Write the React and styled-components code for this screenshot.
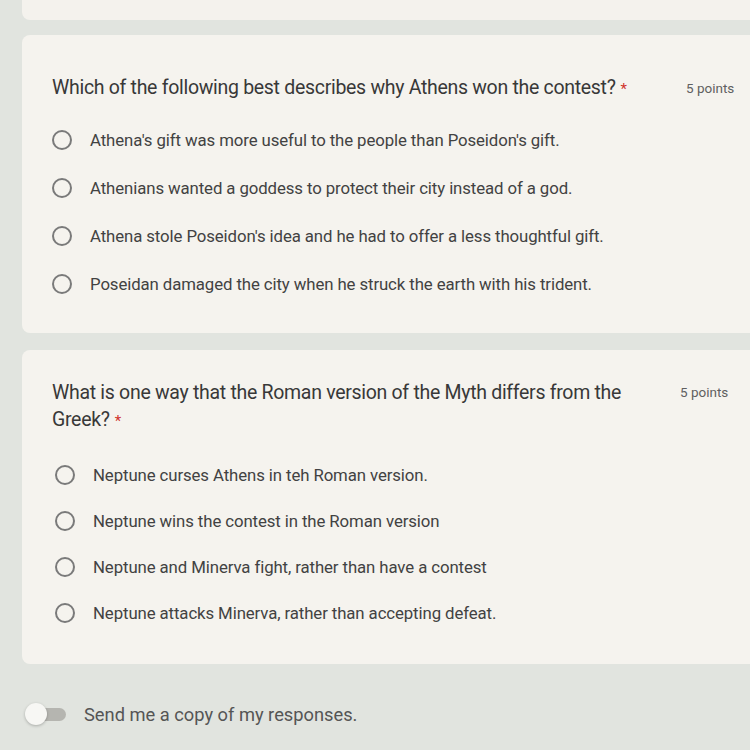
import React from "react";
import styled, { createGlobalStyle } from "styled-components";

const GlobalStyle = createGlobalStyle`
	body {
		margin:0;
		background-color:#e1e4df;
		font-family:Roboto, "Liberation Sans", sans-serif;
	}
`;

const Page = styled.div`
	width:750px;
	height:750px;
	overflow:hidden;
	padding-left:22px;
	box-sizing:border-box;
	display:flex;
	flex-direction:column;
`;

const TopCard = styled.div`
	width:740px;
	height:20px;
	background-color:#f4f2ed;
	border-radius:0 0 8px 8px;
	flex-shrink:0;
`;

const Card = styled.section`
	width:740px;
	margin-top:${p => p.$gap}px;
	padding:${p => p.$top}px 0 ${p => p.$bottom}px 30px;
	box-sizing:border-box;
	background-color:#f5f3ee;
	border-radius:8px;
	flex-shrink:0;
`;

const Header = styled.div`
	display:flex;
	align-items:flex-start;
`;

const Question = styled.h2`
	flex:0 0 ${p => p.$width}px;
	margin:0;
	font-size:19.5px;
	line-height:${p => p.$line}px;
	font-weight:400;
	color:#383838;
	letter-spacing:-0.3px;
`;

const Star = styled.span`
	margin-left:5px;
	color:#d0342c;
	font-size:15px;
	line-height:1;
`;

const Points = styled.span`
	margin-left:${p => p.$left}px;
	margin-top:5px;
	font-size:13.5px;
	color:#5f5f5f;
	white-space:nowrap;
`;

const Options = styled.ul`
	list-style:none;
	margin:${p => p.$gap}px 0 0;
	padding:0;
`;

const Option = styled.li`
	display:flex;
	align-items:center;
	height:${p => p.$height}px;
	padding-left:${p => p.$indent}px;
	font-size:16.8px;
	color:#424242;
	letter-spacing:-0.1px;
`;

const Radio = styled.span`
	width:16px;
	height:16px;
	border:2px solid #7a7a7a;
	border-radius:50%;
	margin-right:18px;
	flex-shrink:0;
`;

const Footer = styled.div`
	display:flex;
	align-items:center;
	margin-top:39px;
`;

const Toggle = styled.span`
	position:relative;
	width:44px;
	height:22px;
	margin-right:18px;
	display:flex;
	align-items:center;
`;

const Track = styled.span`
	margin-left:16px;
	width:28px;
	height:13px;
	border-radius:7px;
	background-color:#b5b5b0;
`;

const Thumb = styled.span`
	position:absolute;
	left:3px;
	top:0;
	width:22px;
	height:22px;
	border-radius:50%;
	background-color:#f7f7f4;
	box-shadow:0 1px 3px rgba(0,0,0,0.25);
`;

const FooterText = styled.span`
	font-size:18.3px;
	color:#555;
`;

const questions = [
	{
		text:"Which of the following best describes why Athens won the contest?",
		width:604, line:26, gap:15, top:40, bottom:25, cardGap:15, points:30, row:48, indent:0,
		options:[
			"Athena's gift was more useful to the people than Poseidon's gift.",
			"Athenians wanted a goddess to protect their city instead of a god.",
			"Athena stole Poseidon's idea and he had to offer a less thoughtful gift.",
			"Poseidan damaged the city when he struck the earth with his trident."
		]
	},
	{
		text:"What is one way that the Roman version of the Myth differs from the Greek?",
		width:590, line:27, gap:19, top:29, bottom:28, cardGap:17, points:38, row:46, indent:3,
		options:[
			"Neptune curses Athens in teh Roman version.",
			"Neptune wins the contest in the Roman version",
			"Neptune and Minerva fight, rather than have a contest",
			"Neptune attacks Minerva, rather than accepting defeat."
		]
	}
];

const App = () => (
	<>
		<GlobalStyle />
		<Page>
			<TopCard />
			{questions.map(q => (
				<Card key={q.text} $gap={q.cardGap} $top={q.top} $bottom={q.bottom}>
					<Header>
						<Question $width={q.width} $line={q.line}>
							{q.text}<Star>*</Star>
						</Question>
						<Points $left={q.points}>5 points</Points>
					</Header>
					<Options $gap={q.gap}>
						{q.options.map(o => (
							<Option key={o} $height={q.row} $indent={q.indent}>
								<Radio />
								{o}
							</Option>
						))}
					</Options>
				</Card>
			))}
			<Footer>
				<Toggle>
					<Track />
					<Thumb />
				</Toggle>
				<FooterText>Send me a copy of my responses.</FooterText>
			</Footer>
		</Page>
	</>
);

export default App;
